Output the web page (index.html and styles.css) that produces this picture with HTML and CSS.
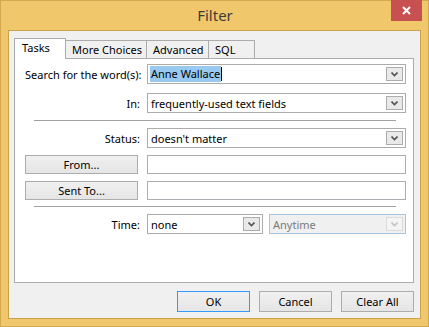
FILE: index.html
```html
<!DOCTYPE html>
<html lang="en">
<head>
    <meta charset="UTF-8">
    <title>Filter</title>
    <link rel="stylesheet" href="styles.css">
</head>
<body>
    <div class="window">
        <div class="titlebar">
            <span></span>
            <div class="title">Filter</div>
            <button class="close" aria-label="Close">
                <svg width="9" height="9" viewBox="0 0 9 9"><path d="M1 1 L8 8 M8 1 L1 8" stroke="#fff" stroke-width="2"/></svg>
            </button>
        </div>
        <div class="client">
            <div class="tabs">
                <div class="tab active tab-tasks">Tasks</div>
                <div class="tab tab-more">More Choices</div>
                <div class="tab tab-adv">Advanced</div>
                <div class="tab tab-sql">SQL</div>
            </div>
            <div class="panel">
                <div class="row row-search">
                    <label class="label">Search for the word(s):</label>
                    <div class="combo">
                        <span class="value"><span class="selected">Anne Wallace</span><span class="caret"></span></span>
                        <span class="drop"><svg width="7" height="5" viewBox="0 0 7 5"><path d="M0.5 0.5 L3.5 3.5 L6.5 0.5" fill="none" stroke="#555" stroke-width="1.6"/></svg></span>
                    </div>
                </div>
                <div class="row row-in">
                    <label class="label">In:</label>
                    <div class="combo">
                        <span class="value">frequently-used text fields</span>
                        <span class="drop"><svg width="7" height="5" viewBox="0 0 7 5"><path d="M0.5 0.5 L3.5 3.5 L6.5 0.5" fill="none" stroke="#555" stroke-width="1.6"/></svg></span>
                    </div>
                </div>
                <div class="separator sep-first"></div>
                <div class="row">
                    <label class="label">Status:</label>
                    <div class="combo">
                        <span class="value">doesn't matter</span>
                        <span class="drop"><svg width="7" height="5" viewBox="0 0 7 5"><path d="M0.5 0.5 L3.5 3.5 L6.5 0.5" fill="none" stroke="#555" stroke-width="1.6"/></svg></span>
                    </div>
                </div>
                <div class="row row-field">
                    <button class="btn btn-side">From...</button>
                    <div class="textbox"></div>
                </div>
                <div class="row row-field">
                    <button class="btn btn-side">Sent To...</button>
                    <div class="textbox"></div>
                </div>
                <div class="separator sep-second"></div>
                <div class="row">
                    <label class="label">Time:</label>
                    <div class="time-group">
                        <div class="combo combo-time">
                            <span class="value">none</span>
                            <span class="drop"><svg width="7" height="5" viewBox="0 0 7 5"><path d="M0.5 0.5 L3.5 3.5 L6.5 0.5" fill="none" stroke="#555" stroke-width="1.6"/></svg></span>
                        </div>
                        <div class="combo combo-disabled">
                            <span class="value">Anytime</span>
                            <span class="drop"><svg width="7" height="5" viewBox="0 0 7 5"><path d="M0.5 0.5 L3.5 3.5 L6.5 0.5" fill="none" stroke="#c4c4c4" stroke-width="1.6"/></svg></span>
                        </div>
                    </div>
                </div>
            </div>
            <div class="actions">
                <button class="btn btn-action btn-default">OK</button>
                <button class="btn btn-action">Cancel</button>
                <button class="btn btn-action">Clear All</button>
            </div>
        </div>
    </div>
</body>
</html>
```

FILE: styles.css
```css
body {
    margin: 0;
    font-family: "Noto Sans", "Open Sans", sans-serif;
    font-size: 11px;
    color: #000;
}
.window {
    width: 429px;
    height: 327px;
    box-sizing: border-box;
    background-color: #f0c86b;
    border: 1px solid #d2a94f;
    display: flex;
    flex-direction: column;
}
.titlebar {
    height: 29px;
    display: grid;
    grid-template-columns: 1fr auto 1fr;
    align-items: start;
}
.title {
    font-size: 15px;
    color: #3c3c3c;
    line-height: 28px;
    padding-left: 1px;
}
.close {
    justify-self: end;
    margin: -1px 6px 0 0;
    width: 31px;
    height: 21px;
    border: none;
    padding: 0;
    background-color: #c75050;
    display: flex;
    align-items: center;
    justify-content: center;
}
.client {
    flex: 1;
    margin: 0 7px 7px 7px;
    border: 1px solid #c9a24c;
    background-color: #f0f0f0;
    padding: 7px 6px 6px 5px;
    display: flex;
    flex-direction: column;
}
.tabs {
    display: flex;
    align-items: flex-end;
    height: 20px;
}
.tab {
    box-sizing: border-box;
    height: 18px;
    border: 1px solid #acacac;
    border-bottom: none;
    background-color: #f0f0f0;
    padding: 0 0 0 6px;
    line-height: 17px;
    margin-left: -1px;
    white-space: nowrap;
}
.tab.active {
    height: 21px;
    background-color: #fff;
    margin-left: 0;
    margin-bottom: -1px;
    position: relative;
    z-index: 1;
    padding-left: 7px;
    line-height: 18px;
}
.tab-tasks { width: 52px; }
.tab-more { width: 82px; }
.tab-adv { width: 63px; }
.tab-sql { width: 47px; }
.panel {
    box-sizing: border-box;
    height: 225px;
    background-color: #fff;
    border: 1px solid #acacac;
    padding: 5px 7px 0 10px;
}
.row {
    display: grid;
    grid-template-columns: 115px 1fr;
    column-gap: 7px;
    align-items: center;
    height: 20px;
}
.row-in {
    margin-top: 9px;
}
.row-field {
    height: 19px;
    margin-top: 7px;
}
.label {
    text-align: right;
    white-space: nowrap;
}
.combo {
    box-sizing: border-box;
    height: 20px;
    border: 1px solid #acacac;
    background-color: #fff;
    display: flex;
    align-items: center;
    padding: 0 2px 0 3px;
}
.combo .value {
    flex: 1;
    display: flex;
    align-items: center;
    white-space: nowrap;
}
.selected {
    background-color: #99c9ef;
    padding: 0 1px 1px 1px;
    margin-left: -1px;
}
.caret {
    width: 1px;
    height: 14px;
    background-color: #000;
}
.drop {
    box-sizing: border-box;
    width: 17px;
    height: 14px;
    border: 1px solid #acacac;
    background-color: #e9e9e9;
    display: flex;
    align-items: center;
    justify-content: center;
}
.time-group {
    display: grid;
    grid-template-columns: 116px 1fr;
    column-gap: 6px;
}
.combo-disabled {
    border-color: #a9c3e2;
    background-color: #f0f0f0;
    color: #7a7a7a;
}
.combo-disabled .drop {
    background-color: #f4f4f4;
    border-color: #dcdcdc;
}
.textbox {
    box-sizing: border-box;
    height: 19px;
    border: 1px solid #abadb3;
    background-color: #fff;
}
.separator {
    height: 1px;
    background-color: #a0a0a0;
    margin: 7px 10px 7px 9px;
}
.sep-second {
    margin-top: 6px;
}
.btn {
    box-sizing: border-box;
    font-family: inherit;
    font-size: 11px;
    color: #000;
    border: 1px solid #acacac;
    background: linear-gradient(#f0f0f0, #e5e5e5);
    padding: 0;
}
.btn-side {
    height: 19px;
    width: 113px;
    line-height: 16px;
}
.actions {
    display: flex;
    justify-content: flex-end;
    gap: 9px;
    margin-top: 8px;
}
.btn-action {
    width: 73px;
    height: 21px;
}
.btn-default {
    border-color: #3399ff;
}
```
